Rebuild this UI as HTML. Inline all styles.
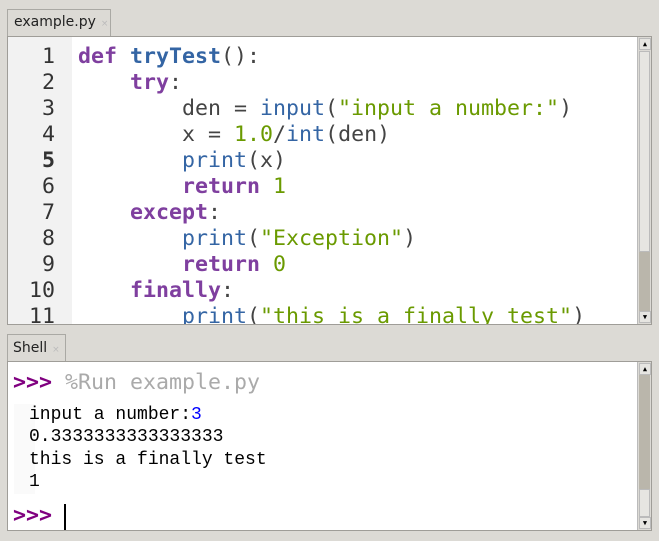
<!DOCTYPE html><html><head><style>
body{margin:0;width:659px;height:541px;background:#dcdad5;position:relative;overflow:hidden;font-family:"DejaVu Sans Mono",monospace}
.tab{position:absolute;background:#dcdad5;border:1px solid #aaa9a4;border-bottom:none;font-family:"DejaVu Sans",sans-serif;font-size:14px;color:#222}
.tab span{color:#bbb;font-size:9px;margin-left:5px}
.frame{position:absolute;background:#fff;border:1px solid #9f9d98;overflow:hidden}
.sb{position:absolute;right:0;top:0;bottom:0;width:13px;background:#dcdad5;border-left:1px solid #bbb}
.arr{position:absolute;left:1px;width:10px;height:10px;background:#e6e5e1;border:1px solid #bbb;font-size:7px;line-height:10px;text-align:center;color:#000}
.code{position:absolute;left:70px;top:7px;font-size:21.6px;line-height:26px;color:#444;white-space:pre}
.gut{position:absolute;left:0;top:0;bottom:0;width:64px;background:#f2f2f2}
.ln{position:absolute;left:0;width:47px;top:7px;text-align:right;font-size:21.6px;line-height:26px;color:#333;white-space:pre}
.k{color:#7f3f9f;font-weight:bold}.f{color:#3465a4;font-weight:bold}.b{color:#3465a4}.s{color:#6a9a00}
</style></head><body>
<div class="tab" style="left:7px;top:9px;width:102px;height:27px;background:#dcdad5"><div style="padding:4px 0 0 6px">example.py<span>×</span></div></div>
<div class="frame" style="left:7px;top:36px;width:643px;height:287px">
<div class="gut"></div>
<div class="ln">1
2
3
4
<b>5</b>
6
7
8
9
10
11</div>
<div class="code"><span class="k">def</span> <span class="f">tryTest</span>():
    <span class="k">try</span>:
        den = <span class="b">input</span>(<span class="s">"input a number:"</span>)
        x = <span class="s">1.0</span>/<span class="b">int</span>(den)
        <span class="b">print</span>(x)
        <span class="k">return</span> <span class="s">1</span>
    <span class="k">except</span>:
        <span class="b">print</span>(<span class="s">"Exception"</span>)
        <span class="k">return</span> <span class="s">0</span>
    <span class="k">finally</span>:
        <span class="b">print</span>(<span class="s">"this is a finally test"</span>)</div>
<div class="sb"><div class="arr" style="top:1px">▲</div><div style="position:absolute;left:1px;top:14px;width:9px;height:199px;background:#e6e5e1;border:1px solid #bbb"></div><div style="position:absolute;left:1px;top:215px;width:11px;height:60px;background:#bab6ab"></div><div class="arr" style="bottom:1px">▼</div></div>
</div>
<div class="tab" style="left:7px;top:334px;width:57px;height:27px"><div style="padding:5px 0 0 5px">Shell<span>×</span></div></div>
<div class="frame" style="left:7px;top:361px;width:643px;height:168px">
<div style="position:absolute;left:5px;top:8px;font-size:21.6px;white-space:pre;color:#aaa"><span style="color:#800080;font-weight:bold">&gt;&gt;&gt;</span> %Run example.py</div>
<div style="position:absolute;left:6px;top:42px;width:21px;height:90px;background:#fafafa"></div>
<div style="position:absolute;left:21px;top:42px;font-family:'Liberation Mono',monospace;font-size:18px;line-height:22.3px;color:#000;white-space:pre">input a number:<span style="color:#0000ff">3</span>
0.3333333333333333
this is a finally test
1</div>
<div style="position:absolute;left:5px;top:141px;font-size:21.6px;color:#800080;font-weight:bold">&gt;&gt;&gt;</div>
<div style="position:absolute;left:56px;top:142px;width:2px;height:26px;background:#000"></div>
<div class="sb"><div class="arr" style="top:1px">▲</div><div style="position:absolute;left:1px;top:13px;width:11px;height:114px;background:#bab6ab"></div><div style="position:absolute;left:1px;top:127px;width:9px;height:26px;background:#e6e5e1;border:1px solid #bbb"></div><div class="arr" style="bottom:1px">▼</div></div>
</div>
</body></html>
